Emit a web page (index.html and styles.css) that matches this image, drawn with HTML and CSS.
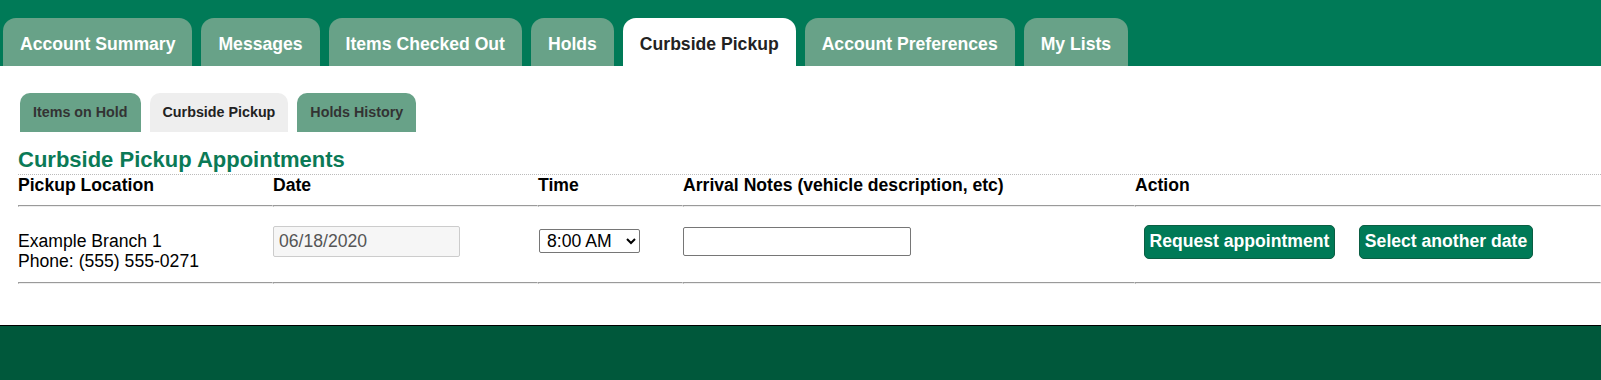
FILE: index.html
```html
<!DOCTYPE html>
<html lang="en">
<head>
<meta charset="utf-8">
<title>Curbside Pickup</title>
<link rel="stylesheet" href="styles.css">
</head>
<body>
<header class="topbar">
  <nav class="tabs">
    <a class="tab">Account Summary</a>
    <a class="tab">Messages</a>
    <a class="tab">Items Checked Out</a>
    <a class="tab">Holds</a>
    <a class="tab tab-active">Curbside Pickup</a>
    <a class="tab">Account Preferences</a>
    <a class="tab">My Lists</a>
  </nav>
</header>
<main class="content">
  <nav class="subtabs">
    <a class="subtab">Items on Hold</a>
    <a class="subtab subtab-active">Curbside Pickup</a>
    <a class="subtab">Holds History</a>
  </nav>
  <h2 class="section-title">Curbside Pickup Appointments</h2>
  <table class="appt">
    <colgroup>
      <col class="c-loc"><col class="c-date"><col class="c-time"><col class="c-notes"><col class="c-action">
    </colgroup>
    <thead>
      <tr>
        <th>Pickup Location</th>
        <th>Date</th>
        <th>Time</th>
        <th>Arrival Notes (vehicle description, etc)</th>
        <th>Action</th>
      </tr>
    </thead>
    <tbody>
      <tr class="rule-row">
        <td><div class="rule"></div></td><td><div class="rule"></div></td><td><div class="rule"></div></td><td><div class="rule"></div></td><td><div class="rule"></div></td>
      </tr>
      <tr class="data-row">
        <td>Example Branch 1<br>Phone: (555) 555-0271</td>
        <td><input class="date-input" type="text" value="06/18/2020" readonly></td>
        <td>
          <select class="time-select">
            <option>8:00 AM</option>
            <option>8:30 AM</option>
            <option>9:00 AM</option>
          </select>
        </td>
        <td><input class="notes-input" type="text"></td>
        <td>
          <span class="actions">
            <button class="btn" type="button">Request appointment</button>
            <button class="btn" type="button">Select another date</button>
          </span>
        </td>
      </tr>
      <tr class="rule-row">
        <td><div class="rule"></div></td><td><div class="rule"></div></td><td><div class="rule"></div></td><td><div class="rule"></div></td><td><div class="rule"></div></td>
      </tr>
    </tbody>
  </table>
</main>
<footer class="footer"></footer>
</body>
</html>
```
FILE: styles.css
```css
* { box-sizing: border-box; }

html, body {
  margin: 0;
  padding: 0;
  background: #ffffff;
  font-family: "Liberation Sans", Arial, sans-serif;
  font-size: 17.6px;
  color: #000;
}

.topbar {
  background: #007a57;
  height: 66px;
  padding: 18px 0 0 3px;
}

.tabs {
  display: flex;
  gap: 9px;
  height: 48px;
}

.tab {
  display: flex;
  align-items: center;
  height: 48px;
  padding: 5px 17px 0;
  background: #68a288;
  color: #ffffff;
  font-weight: bold;
  font-size: 17.6px;
  border-radius: 13px 13px 0 0;
  white-space: nowrap;
}

.tab-active {
  background: #ffffff;
  color: #222222;
}

.content {
  padding: 27px 0 41px 18px;
}

.subtabs {
  display: flex;
  gap: 9px;
  height: 39px;
  margin-left: 2px;
}

.subtab {
  display: flex;
  align-items: center;
  height: 39px;
  padding: 0 13px 2px;
  background: #68a288;
  color: #333333;
  font-weight: bold;
  font-size: 14.3px;
  border-radius: 10px 10px 0 0;
  white-space: nowrap;
}

.subtab-active {
  background: #eeeeee;
  color: #222222;
}

.section-title {
  margin: 15px 0 0;
  padding: 0 0 2px;
  font-size: 22px;
  line-height: 25px;
  font-weight: bold;
  color: #0b7a56;
  border-bottom: 1px dotted #bbbbbb;
}

.appt {
  width: 100%;
  border-collapse: collapse;
  table-layout: fixed;
}

.c-loc { width: 255px; }
.c-date { width: 265px; }
.c-time { width: 145px; }
.c-notes { width: 452px; }

.appt th {
  text-align: left;
  font-weight: bold;
  font-size: 17.6px;
  height: 29px;
  padding: 0 0 9px;
  vertical-align: top;
}

.rule-row td {
  padding: 0;
  height: 2px;
}

.rule {
  height: 2px;
  border-top: 1px solid #9a9a9a;
  border-left: 1px solid #9a9a9a;
  border-bottom: 1px solid #eeeeee;
  border-right: 1px solid #eeeeee;
}

.data-row td {
  padding: 17.6px 0 10px;
  vertical-align: baseline;
  line-height: 20.2px;
}

.date-input {
  width: 187px;
  height: 30.6px;
  padding: 0 5px;
  border: 1px solid #cccccc;
  border-radius: 2px;
  background: #f6f6f6;
  color: #555555;
  font-family: "Liberation Sans", Arial, sans-serif;
  font-size: 17.6px;
}

.time-select {
  width: 101px;
  height: 24.5px;
  padding: 0 0 0 3px;
  margin-left: 1px;
  border: 1px solid #767676;
  border-radius: 2px;
  background: #ffffff;
  color: #000;
  font-family: "Liberation Sans", Arial, sans-serif;
  font-size: 17.6px;
}

.notes-input {
  width: 228px;
  height: 28.6px;
  padding: 0 4px;
  border: 1px solid #767676;
  border-radius: 2px;
  background: #ffffff;
  font-family: "Liberation Sans", Arial, sans-serif;
  font-size: 17.6px;
}

.actions {
  display: inline-flex;
  gap: 23.5px;
  margin-left: 8.5px;
}

.btn {
  height: 34px;
  padding: 0 5px;
  background: #007a57;
  border: 1px solid #0b5e43;
  border-radius: 5px;
  color: #ffffff;
  font-family: "Liberation Sans", Arial, sans-serif;
  font-weight: bold;
  font-size: 17.6px;
  white-space: nowrap;
}

.footer {
  border-top: 1px solid #000000;
  background: #00583b;
  height: 60px;
}
```
